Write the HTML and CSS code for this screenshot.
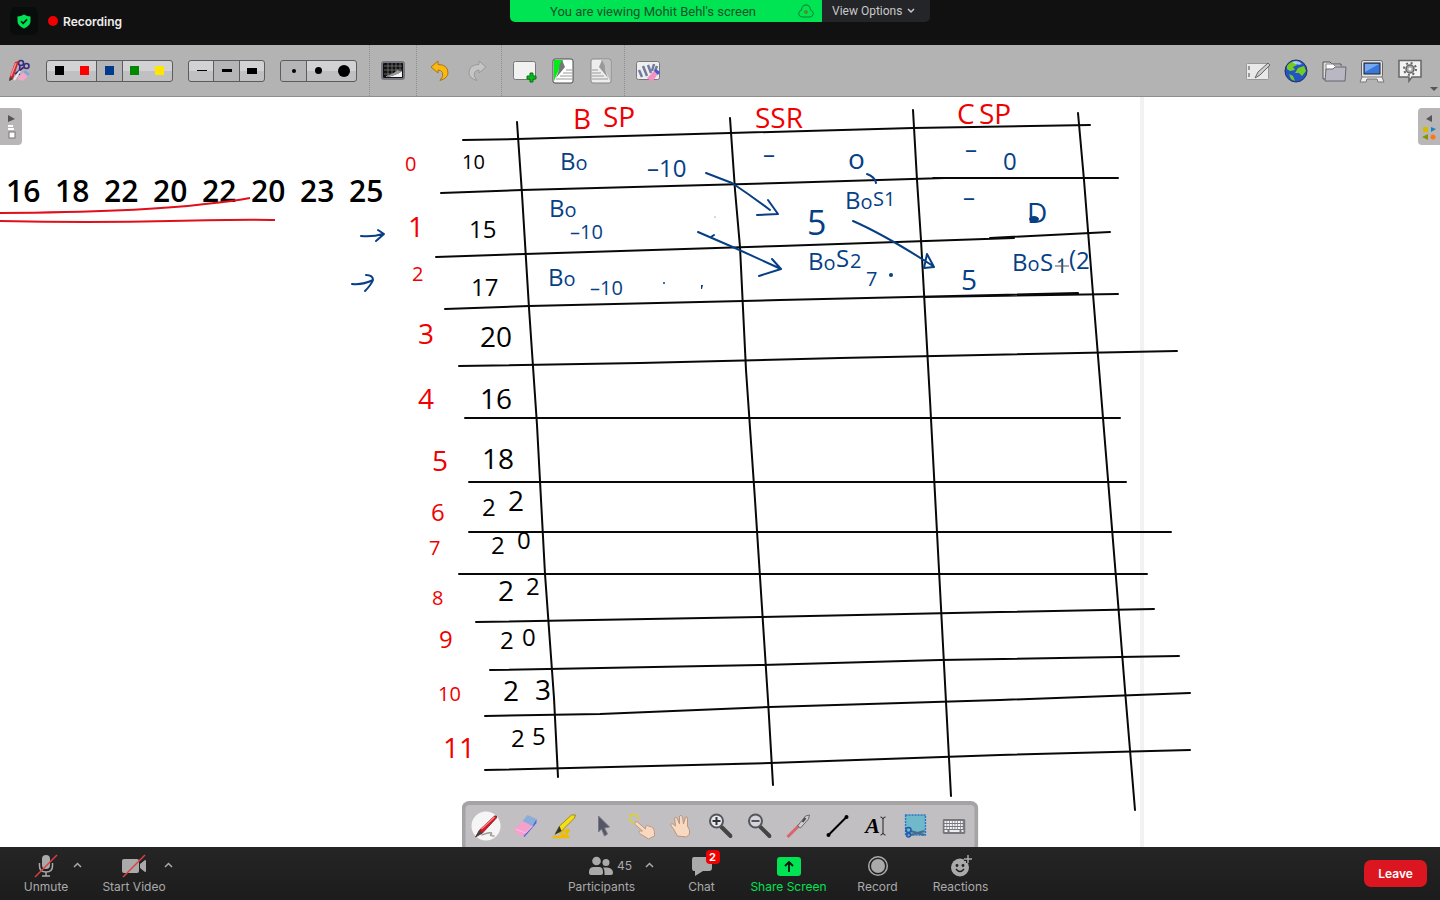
FILE: index.html
```html
<!DOCTYPE html>
<html lang="en">
<head>
<meta charset="utf-8">
<title>Screen share</title>
<link rel="stylesheet" href="styles.css">
</head>
<body>
<header class="topbar">
  <div class="status">
    <button class="shield" aria-label="Meeting information"><svg width="14" height="15" viewBox="0 0 14 15"><path d="M7 0.500Q10 2.500 13.500 2.500V7Q13.500 12 7 14.500Q.5 12 .5 7V2.500Q4 2.500 7 .5Z" fill="#00e352"/><path d="M4 7.200L6.200 9.400L10 5.400" fill="none" stroke="#111" stroke-width="1.600"/></svg></button>
    <span class="rec-dot"></span><span class="rec-label">Recording</span>
  </div>
  <div class="sharing">
    <div class="viewing"><span>You are viewing Mohit Behl's screen</span>
      <svg class="cloud" width="16" height="14" viewBox="0 0 16 14" fill="none" stroke="#087d32"><path d="M4 13Q.7 12.500.7 9.500Q.7 6.900 3.500 6.200Q3.700 1 8 1T12.500 6.200Q15.300 6.900 15.300 9.500Q15.300 12.500 12 13Z"/><circle cx="8" cy="8" r="1.500" fill="#5c8b20" stroke="#5c8b20"/></svg></div>
    <button class="options">View Options <svg width="8" height="6" viewBox="0 0 8 6"><path d="M1 1L4 4L7 1" fill="none" stroke="#c8c8c8" stroke-width="1.500"/></svg></button>
  </div>
</header>

<nav class="toolbar" aria-label="Board tools">
  <button class="tool" aria-label="Stylus tools"><svg width="24" height="24" viewBox="0 0 24 24"><path d="M10 20L18 11L23 15L16 22Z" fill="#f1a7c8"/><path d="M16 13L18 11L23 15L21 17Z" fill="#7aa5df"/><g fill="none" stroke="#392a7d" stroke-width="1.600"><circle cx="14" cy="4" r="2.500"/><circle cx="19.500" cy="7" r="2.500"/><path d="M13 6L12 16M17 8L8 15"/></g><path d="M8 3L12 2L6 20L2 22L3 17Z" fill="#cb2632"/><path d="M9 4L4 17" stroke="#ff8a8a" stroke-width="1.500"/><path d="M2 22L3 18L6 20Z" fill="#444"/><path d="M13 12L7 21" stroke="#eee" stroke-width="2"/></svg></button>
  <div class="segment colors">
    <button aria-label="Black"><i class="swatch black"></i></button><button aria-label="Red"><i class="swatch red"></i></button><button class="on" aria-label="Blue"><i class="swatch blue"></i></button><button aria-label="Green"><i class="swatch green"></i></button><button aria-label="Yellow"><i class="swatch yellow"></i></button>
  </div>
  <div class="segment">
    <button aria-label="Thin line"><i class="line thin"></i></button><button class="on" aria-label="Medium line"><i class="line medium"></i></button><button aria-label="Thick line"><i class="line thick"></i></button>
  </div>
  <div class="segment">
    <button class="on" aria-label="Small eraser"><i class="dot small"></i></button><button aria-label="Medium eraser"><i class="dot mid"></i></button><button aria-label="Large eraser"><i class="dot large"></i></button>
  </div>
  <div class="group lead">
    <button class="tool" aria-label="Page background"><svg width="24" height="19" viewBox="0 0 24 19"><rect x="1" y="1" width="22" height="17" rx="2" fill="#111" stroke="#77777f" stroke-width="2"/><path d="M3 5H21M3 9H21M3 13H21M7 2V16M11 2V16M15 2V16M19 2V16" stroke="#777" stroke-width=".8"/><path d="M6 16Q16 14 21 10V16Z" fill="#f4f4f4"/><path d="M5 15Q15 12 17 8Q17 11 21 10Q17 14 5 16Z" fill="#999"/></svg></button>
  </div>
  <div class="group">
    <button class="tool" aria-label="Undo"><svg width="20" height="22" viewBox="0 0 20 22"><path d="M1 7L8 1V4.500Q18 4.500 18 13Q18 18 10 20.500Q14 16 12.500 12.500Q11 10 8 10V13Z" fill="#fbb80f" stroke="#a87618"/></svg></button>
    <button class="tool" aria-label="Redo"><svg width="20" height="22" viewBox="0 0 20 22"><path d="M18 7L11 1V4.500Q1 4.500 1 13Q1 18 9 20.500Q5 16 6.500 12.500Q8 10 11 10V13Z" fill="#c5c5c5" stroke="#999"/></svg></button>
  </div>
  <div class="group">
    <button class="tool" aria-label="New page"><svg width="26" height="26" viewBox="0 0 26 26"><rect x="1.500" y="3.500" width="22" height="18" rx="2" fill="#f1f1f1" stroke="#77777a"/><path d="M18 15H21V18H24V21H21V24H18V21H15V18H18Z" fill="#09bd19" stroke="#087213"/></svg></button>
    <button class="tool" aria-label="Previous page"><svg width="22" height="26" viewBox="0 0 22 26"><rect x="1" y="1" width="20" height="24" rx="2" fill="#fff" stroke="#4a4a4a"/><path d="M2 2H11L2 23Z" fill="#00ed18"/><path d="M10 2L13 9L4 20Q8 10 7 8L10 2Z" fill="#777"/><path d="M14 12H20M11 15H20M8 18H20M4 21H20" stroke="#999"/></svg></button>
    <button class="tool" aria-label="Next page"><svg width="22" height="26" viewBox="0 0 22 26"><rect x="1" y="1" width="20" height="24" rx="2" fill="#ededed" stroke="#888"/><path d="M11 2H20V23Z" fill="#c0c0c0"/><path d="M12 2L9 9L18 20Q14 10 15 8Z" fill="#999"/><path d="M2 12H8M2 15H11M2 18H14M2 21H18" stroke="#999"/></svg></button>
  </div>
  <div class="group">
    <button class="tool" aria-label="Erase page"><svg width="26" height="24" viewBox="0 0 26 24"><rect x="1.500" y="2.500" width="23" height="18" rx="2" fill="#eee" stroke="#79767b"/><path d="M4 11L7 18M8 7L12 17M13 6L16 14M19 5L17 12M22 7L20 12" stroke="#6f7c9b" stroke-width="2.500"/><path d="M12 19L19 12L23 15L17 23Z" fill="#f591c5"/><path d="M19 12L21 10L25 13L23 16Z" fill="#4659cd"/></svg></button>
  </div>
  <div class="apps">
    <button class="tool" aria-label="Board"><svg width="26" height="20" viewBox="0 0 26 20"><rect x="1.500" y="2.500" width="22" height="16" rx="1" fill="#e9e9e9" stroke="#999"/><path d="M4 5V9M4 12V16" stroke="#999" stroke-width="2"/><path d="M10 17L13 11L23 2L25 4L15 14Z" fill="#ccc" stroke="#666"/></svg></button>
    <button class="tool" aria-label="Web"><svg width="24" height="24" viewBox="0 0 24 24"><circle cx="12" cy="12" r="11" fill="#2454c4" stroke="#20325d"/><path d="M3 7Q7 2 11 3L13 6L9 8L11 11L6 12L3 10ZM14 9L20 7L22 12L18 17L15 14L11 14ZM5 15L9 17L11 22L7 20Z" fill="#75cb22"/><path d="M8 3Q14 0 18 5Q13 7 8 3" fill="#c6e1fb" opacity=".8"/></svg></button>
    <button class="tool" aria-label="Documents"><svg width="26" height="24" viewBox="0 0 26 24"><path d="M2 3H9L11 5H20V20H2Z" fill="#ddd" stroke="#555"/><path d="M5 5H12L14 7H21V12H5Z" fill="#fff" stroke="#888"/><path d="M5 10H12L14 8H25L24 22H4Z" fill="#b8b7c2" stroke="#676672"/></svg></button>
    <button class="tool" aria-label="Desktop"><svg width="26" height="24" viewBox="0 0 26 24"><rect x="2.500" y="1.500" width="21" height="17" rx="2" fill="#e3e3e3" stroke="#666"/><rect x="5" y="4" width="16" height="11" fill="#3977dc" stroke="#222"/><path d="M6 5H20L6 13Z" fill="#78a9f0"/><path d="M3 18H23L25 23H19L18 20H8L7 23H1Z" fill="#eee" stroke="#777"/></svg></button>
    <button class="tool" aria-label="Settings"><svg width="26" height="24" viewBox="0 0 26 24"><path d="M2 1.500H24V18H15L12 22V18H2Z" fill="#f3f3f3" stroke="#666" stroke-width="1.500"/><circle cx="13" cy="10" r="6" fill="none" stroke="#666" stroke-width="2" stroke-dasharray="2 2.700"/><circle cx="13" cy="10" r="4" fill="#aaa" stroke="#666" stroke-width="1.500"/><circle cx="13" cy="10" r="1.500" fill="#fff"/></svg></button>
  </div>
  <svg class="more" width="8" height="5" viewBox="0 0 8 5"><path d="M0 0H8L4 4Z" fill="#555"/></svg>
</nav>

<main class="board">
  <svg class="canvas" viewBox="0 97 1440 750" preserveAspectRatio="xMinYMin meet" role="img" aria-label="Handwritten table">
    <path d="M1142 97V847" stroke="#f2f1f4" stroke-width="4"/>
    <g class="grid">
      <path d="M463 140L517 139L730 133L913 128L1090 125"/>
      <path d="M441 193L522 190L780 183L945 178M933 178H1118"/>
      <path d="M436 257L525 254L780 246L1014 238M990 238L1110 232"/>
      <path d="M445 309L529 306L780 300L1078 293M925 297L1118 294"/>
      <path d="M459 366L640 363L840 358L1177 351"/>
      <path d="M465 418H1120M469 482H1126M469 532H1171M459 574H1147"/>
      <path d="M476 622L760 617L1000 612L1154 609"/>
      <path d="M490 670L760 665L940 660L1179 656"/>
      <path d="M485 716L600 714L770 707L1000 700L1190 693"/>
      <path d="M485 770L770 763L1000 755L1190 750"/>
      <path d="M517 122L522 194L529 308L537 425L545 574L554 698L558 777"/>
      <path d="M730 118L735 190L740 247L746 370L755 500L768 700L773 785"/>
      <path d="M913 110L917 180L921 240L930 400L939 570L951 796"/>
      <path d="M1078 113L1084 180L1093 294L1103 418L1117 590L1125 690L1135 810"/>
    </g>
    <g class="typed">
      <text x="6" y="202">16</text><text x="55" y="202">18</text><text x="104" y="202">22</text><text x="153" y="202">20</text><text x="202" y="202">22</text><text x="251" y="202">20</text><text x="300" y="202">23</text><text x="349" y="202">25</text>
    </g>
    <path d="M0 213Q140 212 205 204Q235 201 250 198M0 221Q90 223 170 221T275 220" class="underline"/>
    <g class="ink black">
      <text x="462" y="169" class="s">10</text>
      <text x="469" y="238">15</text>
      <text x="471" y="296">17</text>
      <text x="480" y="347" class="l">20</text>
      <text x="480" y="409" class="l">16</text>
      <text x="482" y="469" class="l">18</text>
      <text x="482" y="516">2</text><text x="508" y="511" class="l">2</text>
      <text x="491" y="554">2</text><text x="517" y="549">0</text>
      <text x="498" y="601" class="l">2</text><text x="526" y="595">2</text>
      <text x="500" y="649">2</text><text x="522" y="646">0</text>
      <text x="503" y="701" class="l">2</text><text x="535" y="700" class="l">3</text>
      <text x="511" y="747">2</text><text x="532" y="745">5</text>
    </g>
    <g class="ink red">
      <text x="405" y="171" class="s">0</text><text x="408" y="237" class="l">1</text><text x="412" y="281" class="s">2</text><text x="418" y="344" class="l">3</text><text x="418" y="409" class="l">4</text><text x="432" y="471" class="l">5</text><text x="431" y="521">6</text><text x="429" y="555" class="s">7</text><text x="432" y="605" class="s">8</text><text x="439" y="648">9</text><text x="438" y="701" class="s">10</text><text x="443" y="758" class="l">11</text>
      <text x="573" y="129" class="l">B</text><text x="603" y="127" class="l">SP</text>
      <text x="755" y="128" class="l">SSR</text>
      <text x="957" y="124" class="l">C</text><text x="979" y="124" class="l">SP</text>
    </g>
    <g class="ink blue">
      <text x="560" y="170">B<tspan class="s">o</tspan></text><text x="647" y="177">–10</text>
      <text x="549" y="217">B<tspan class="s">o</tspan></text><text x="570" y="239" class="s">–10</text>
      <text x="548" y="286">B<tspan class="s">o</tspan></text><text x="590" y="295" class="s">–10</text>
      <text x="763" y="163">–</text><text x="848" y="169" class="l">o</text>
      <text x="845" y="209">B<tspan class="s">o</tspan></text><text x="873" y="206" class="s">S1</text>
      <text x="807" y="235" class="xl">5</text>
      <text x="808" y="270">B<tspan class="s">o</tspan></text><text x="836" y="267">S</text><text x="850" y="268" class="s">2</text>
      <text x="866" y="286" class="s">7</text>
      <text x="965" y="158">–</text><text x="1003" y="170">0</text>
      <text x="963" y="206">–</text><text x="1027" y="223" class="l">D</text>
      <text x="961" y="290" class="l">5</text>
      <text x="1012" y="271">B<tspan class="s">o</tspan></text><text x="1040" y="271">S</text><text x="1056" y="273" class="s">1</text><text x="1069" y="267">(</text><text x="1076" y="269">2</text>
    </g>
    <g class="arrows">
      <path d="M361 236Q373 237 383 234M378 230L384 234L376 241"/>
      <path d="M352 284Q363 285 373 280M366 275Q373 275 373 280Q371 285 365 291"/>
      <path d="M706 173L732 183Q750 195 770 210M768 200L778 214L757 215"/>
      <path d="M698 232L735 248L781 269M711 237L714 235M772 259L781 269L759 276"/>
      <path d="M853 221Q885 235 933 266M927 254L934 267L924 268Z"/>
      <path d="M867 174Q875 177 876 183"/>
    </g>
    <g fill="#063f86"><ellipse cx="1034" cy="219" rx="5" ry="3"/><circle cx="891" cy="275" r="2"/><circle cx="664" cy="283" r="1"/><path d="M701 285h2l-1 4h-1z"/><circle cx="715" cy="217" r=".5"/></g>
    <path d="M1062 258V273M1055 266H1069" stroke="#555" stroke-width="1"/>
  </svg>

  <button class="tab left" aria-label="Pages"><svg width="10" height="24" viewBox="0 0 10 24"><path d="M2 0L9 4L2 7Z" fill="#555"/><path d="M2 11H7M2 14H8" stroke="#fff" stroke-width="2"/><rect x="3" y="17" width="6" height="6" fill="#fff" stroke="#777"/></svg></button>
  <button class="tab right" aria-label="Library"><svg width="14" height="26" viewBox="0 0 14 26"><path d="M10 1L4 5L10 8Z" fill="#555"/><path d="M1 13H6V18H1Z" fill="#d6b900"/><path d="M9 13L14 15L9 18Z" fill="#1584bd"/><path d="M6 20L0 23L6 26Z" fill="#829700"/><circle cx="11" cy="23" r="2.500" fill="#ff7616"/></svg></button>

  <div class="palette" role="toolbar" aria-label="Drawing tools">
    <button class="on" aria-label="Pen"><svg width="30" height="30" viewBox="0 0 30 30"><path d="M10 24Q21 20 20 23Q17 25 23 25" fill="none" stroke="#999" stroke-width="1.500"/><path d="M4 26L8 19L23 5Q26 4 25 7L11 22Z" fill="#d51a25" stroke="#691d22" stroke-width=".7"/><path d="M10 18L23 6" stroke="#ff8585" stroke-width="1.200"/><path d="M4 26L8 19L11 22Z" fill="#444"/></svg></button>
    <button aria-label="Eraser"><svg width="24" height="24" viewBox="0 0 24 24"><path d="M1 15L9 7L19 12L10 23L2 19Z" fill="#f6a0cd"/><path d="M9 7L14 1L23 5L19 12Z" fill="#8aaed9"/><path d="M19 12L23 5V9L11 23L10 22Z" fill="#5367d9"/><path d="M2 15L12 19L19 12" fill="none" stroke="#fac4df"/></svg></button>
    <button aria-label="Marker"><svg width="26" height="26" viewBox="0 0 26 26"><path d="M1 24H16L8 20M11 19Q20 15 16 19T18 24" fill="none" stroke="#eebc00" stroke-width="2.500"/><path d="M4 20L8 13L20 2L24 2L23 5L9 19Z" fill="#f6dd14" stroke="#80720d" stroke-width=".7"/><path d="M3 22L8 13L10 18Z" fill="#333"/></svg></button>
    <button aria-label="Select"><svg width="16" height="22" viewBox="0 0 16 22"><path d="M3 1L14 12L9 13L12 19L9 21L6 14L3 17Z" fill="#555664" stroke="#777985"/></svg></button>
    <button aria-label="Play"><svg width="28" height="28" viewBox="0 0 28 28"><path d="M9 10L17 17Q17 12 20 14L23 15Q26 16 26 22L26 24L20 27L12 22Q8 19 12 19L14 19L6 12Q7 8 9 10Z" fill="#f8d8be" stroke="#bd9980"/><path d="M5 1V4M5 9V12M0 6H3M8 6H11M1 2L3 4M9 2L7 4M1 10L3 8" stroke="#e5d413" stroke-width="1.500"/></svg></button>
    <button aria-label="Scroll"><svg width="24" height="26" viewBox="0 0 24 26"><path d="M8 23L4 16L1 12Q2 9 6 13L5 5Q7 3 8 6L10 11V3Q12 1 13 4L14 11L16 4Q18 3 18 6L18 13L20 17L20 21L17 24Z" fill="#f8d8be" stroke="#b79780"/></svg></button>
    <button aria-label="Zoom in"><svg width="24" height="26" viewBox="0 0 24 26"><path d="M13 14L22 23" stroke="#444" stroke-width="4" stroke-linecap="round"/><circle cx="8" cy="8" r="6.500" fill="#e8e8ef" stroke="#55565c" stroke-width="2"/><path d="M4 8H12M8 4V12" stroke="#333" stroke-width="2"/></svg></button>
    <button aria-label="Zoom out"><svg width="24" height="26" viewBox="0 0 24 26"><path d="M13 14L22 23" stroke="#444" stroke-width="4" stroke-linecap="round"/><circle cx="8" cy="8" r="6.500" fill="#d5d4de" stroke="#55565c" stroke-width="2"/><path d="M4 8H12" stroke="#555" stroke-width="2"/></svg></button>
    <button aria-label="Laser pointer"><svg width="26" height="26" viewBox="0 0 26 26"><path d="M2 24L14 12" stroke="#d9646c" stroke-width="3"/><path d="M12 13L20 3L24 2L23 6L15 15Z" fill="#ccc" stroke="#555" stroke-width=".8"/><path d="M17 9L20 5" stroke="#444" stroke-width="2"/></svg></button>
    <button aria-label="Line"><svg width="24" height="24" viewBox="0 0 24 24"><path d="M3 21L21 3" stroke="#000" stroke-width="2"/><circle cx="3" cy="21" r="2" /><circle cx="21" cy="3" r="2"/></svg></button>
    <button class="letter" aria-label="Text">A<svg width="7" height="20" viewBox="0 0 7 20"><path d="M1 1Q3 1 3.500 3Q4 1 6 1M3.500 3V17M1 19Q3 19 3.500 17Q4 19 6 19" fill="none" stroke="#222"/></svg></button>
    <button aria-label="Capture"><svg width="22" height="24" viewBox="0 0 22 24"><rect x="1" y="1" width="20" height="20" fill="#70b9cb" stroke="#2476cc" stroke-width="1.500" stroke-dasharray="2 1"/><path d="M6 17L20 21M6 21L20 17" stroke="#466a91" stroke-width="2"/><circle cx="4" cy="16" r="2.500" fill="none" stroke="#245aab" stroke-width="1.500"/><circle cx="4" cy="21" r="2" fill="none" stroke="#245aab" stroke-width="1.500"/></svg></button>
    <button aria-label="Keyboard"><svg width="23" height="15" viewBox="0 0 23 15"><rect x=".5" y=".5" width="22" height="14" rx="1" fill="#777782" stroke="#777"/><path d="M2 3H21M2 6H21M2 9H21" stroke="#f5f5f5" stroke-width="2" stroke-dasharray="2 .7"/><path d="M2 12H5M7 12H17M19 12H21" stroke="#eee" stroke-width="2"/></svg></button>
  </div>
</main>

<footer class="meeting">
  <div class="media">
    <div class="control audio"><button class="item"><span class="icon"><svg width="24" height="24" viewBox="0 0 24 24"><rect x="8" y="1" width="8" height="14" rx="4" fill="#aaa"/><path d="M5.500 9V12Q5.500 18 12 18T18.500 12V9M12 18V22M8 22H16" fill="none" stroke="#aaa" stroke-width="1.500"/><path d="M1 23L23 1" stroke="#df3e43" stroke-width="1.500"/></svg></span>Unmute</button>
      <button class="caret" aria-label="Audio options"><svg width="9" height="6" viewBox="0 0 9 6"><path d="M1 5L4.500 1.500L8 5" fill="none" stroke="#aaa" stroke-width="1.500"/></svg></button></div>
    <div class="control video"><button class="item"><span class="icon"><svg width="26" height="24" viewBox="0 0 26 24"><rect x="1" y="5" width="17" height="14" rx="2" fill="#aaa"/><path d="M19 10L24 6Q25 6 25 7V17Q25 18 24 18L19 14Z" fill="#aaa"/><path d="M2 23L24 1" stroke="#df3e43" stroke-width="1.500"/></svg></span>Start Video</button>
      <button class="caret" aria-label="Video options"><svg width="9" height="6" viewBox="0 0 9 6"><path d="M1 5L4.500 1.500L8 5" fill="none" stroke="#aaa" stroke-width="1.500"/></svg></button></div>
  </div>
  <div class="actions">
    <div class="control people"><button class="item"><span class="icon"><svg width="24" height="20" viewBox="0 0 24 20"><circle cx="7.500" cy="5" r="4.300" fill="#aaa"/><circle cx="17" cy="6.500" r="3.500" fill="#aaa"/><path d="M0 16Q0 11 5 11H10Q14 11 14 16V17Q14 19 12 19H2Q0 19 0 17ZM14 11.500H18Q24 12 24 17Q24 19 22 19H15.500V16Q15.500 13 14 11.500Z" fill="#aaa"/></svg><span class="count">45</span></span>Participants</button>
      <button class="caret" aria-label="Participant options"><svg width="9" height="6" viewBox="0 0 9 6"><path d="M1 5L4.500 1.500L8 5" fill="none" stroke="#aaa" stroke-width="1.500"/></svg></button></div>
    <button class="item chat"><span class="icon"><svg width="22" height="20" viewBox="0 0 22 20"><path d="M3 1H18Q21 1 21 4V12Q21 15 18 15H12L4 20V15H3Q1 15 1 12V4Q1 1 3 1Z" fill="#aaa"/></svg><b class="badge">2</b></span>Chat</button>
    <button class="item share"><span class="icon"><svg width="24" height="19" viewBox="0 0 24 19"><rect width="24" height="19" rx="3" fill="#00e352"/><path d="M12 15V5M8 9L12 5L16 9" fill="none" stroke="#111" stroke-width="1.800"/></svg></span>Share Screen</button>
    <button class="item record"><span class="icon"><svg width="22" height="22" viewBox="0 0 22 22"><circle cx="11" cy="11" r="9.300" fill="none" stroke="#aaa" stroke-width="1.500"/><circle cx="11" cy="11" r="7" fill="#aaa"/></svg></span>Record</button>
    <button class="item react"><span class="icon"><svg width="22" height="22" viewBox="0 0 22 22"><circle cx="10" cy="12.500" r="9" fill="#aaa"/><circle cx="7" cy="10.500" r="1.400" fill="#222"/><circle cx="13" cy="10.500" r="1.400" fill="#222"/><path d="M6 14Q10 19 14 14" fill="none" stroke="#222" stroke-width="1.500"/><path d="M18 0V8M14 4H22" stroke="#222" stroke-width="4"/><path d="M18 0V8M14 4H22" stroke="#aaa" stroke-width="1.500"/></svg></span>Reactions</button>
  </div>
  <button class="leave">Leave</button>
</footer>
</body>
</html>
```

FILE: styles.css
```css
* { box-sizing: border-box; }
body { margin: 0; min-height: 100vh; display: flex; flex-direction: column; background: #fff; font-family: Inter, "Liberation Sans", sans-serif; overflow: hidden; }
button { margin: 0; padding: 0; border: 0; background: none; font: inherit; color: inherit; cursor: pointer; }
svg { display: block; flex: none; }

.topbar { height: 45px; flex: none; display: grid; grid-template-columns: 1fr auto 1fr; align-items: start; background: #111; }
.status { display: flex; align-items: center; padding: 7px 0 0 10px; color: #eee; font-size: 12px; font-weight: 600; }
.shield { width: 28px; height: 28px; border-radius: 6px; background: #080d0b; display: grid; place-items: center; }
.rec-dot { width: 10px; height: 10px; margin: 0 5px 0 10px; border-radius: 50%; background: #f00000; }
.sharing { display: flex; height: 22px; border-radius: 0 0 5px 5px; overflow: hidden; font-family: Roboto, sans-serif; }
.viewing { width: 312px; display: flex; align-items: center; justify-content: flex-end; gap: 42px; padding-right: 8px; background: #00e352; color: #14532d; font-size: 13px; }
.options { width: 108px; display: flex; align-items: center; gap: 5px; padding-left: 10px; background: #242528; color: #c8c8c8; font-size: 12px; }

.toolbar { position: relative; height: 52px; flex: none; display: flex; align-items: center; background: #b3b3b3; border-bottom: 1px solid #8e8e8e; }
.tool { width: 38px; height: 38px; display: grid; place-items: center; }
.segment { display: flex; height: 22px; margin: 0 7px 0 8px; border: 1px solid #5c5c5e; border-radius: 3px; overflow: hidden; background: linear-gradient(#d2d1d3 50%, #c0bfc1 50%); }
.segment button { width: 25px; display: grid; place-items: center; }
.segment .on { background: #b5b4b6; box-shadow: 1px 0 #5c5c5e, -1px 0 #5c5c5e; }
.swatch { width: 9px; height: 9px; }
.swatch.black { background: #000; }
.swatch.red { background: #f00; }
.swatch.blue { background: #003a8c; }
.swatch.green { background: #008a00; }
.swatch.yellow { background: #ffe600; }
.line { width: 10px; background: #000; }
.thin { height: 1px; }
.medium { height: 3px; }
.thick { height: 6px; }
.dot { border-radius: 50%; background: #000; }
.small { width: 4px; height: 4px; }
.mid { width: 7px; height: 7px; }
.large { width: 12px; height: 12px; }
.group { height: 100%; display: flex; align-items: center; padding: 0 4px; border-left: 1px dotted #8e8e8e; }
.lead { margin-left: 5px; }
.apps { display: flex; margin-left: auto; padding-right: 11px; }
.more { position: absolute; right: 2px; bottom: 4px; }

.board { position: relative; flex: 1; min-height: 0; overflow: hidden; background: #fff; }
.canvas { width: 100%; height: auto; }
.grid { fill: none; stroke: #080808; stroke-width: 2; stroke-linecap: round; stroke-linejoin: round; }
.typed { font: 600 30px "Open Sans", sans-serif; fill: #000; }
.underline { fill: none; stroke: #e0101a; stroke-width: 2; }
.ink { font-family: "Open Sans", sans-serif; font-size: 24px; }
.ink .s { font-size: 20px; }
.ink .l { font-size: 28px; }
.ink .xl { font-size: 34px; }
.ink.black { fill: #000; }
.ink.red { fill: #f00000; }
.ink.blue { fill: #063f86; }
.arrows { fill: none; stroke: #063f86; stroke-width: 2; stroke-linecap: round; stroke-linejoin: round; }

.tab { position: absolute; display: grid; place-items: center; height: 37px; width: 22px; background: #b9b6b7; }
.tab.left { left: 0; top: 11px; border-radius: 0 4px 4px 0; }
.tab.right { right: 0; top: 11px; border-radius: 4px 0 0 4px; }
.palette { position: absolute; left: 50%; bottom: 0; transform: translateX(-50%); display: flex; height: 46px; padding: 0 1px; border: 4px solid #a5a3a5; border-bottom: 0; border-radius: 8px 8px 0 0; background: #c1bfc1; }
.palette button { width: 39px; height: 42px; display: flex; align-items: center; justify-content: center; }
.palette .on { background: radial-gradient(circle, #f5f5f5 14px, transparent 15px); }
.palette .letter { font: italic 700 22px "Liberation Serif", serif; }

.meeting { height: 53px; flex: none; display: flex; justify-content: space-between; background: linear-gradient(#252525, #1c1c1c); color: #aaa; font-size: 12px; line-height: 16px; }
.media, .actions { display: flex; }
.media { width: 179px; padding-left: 14px; }
.control { position: relative; }
.item { width: 100%; display: flex; flex-direction: column; align-items: center; padding-top: 6px; }
.icon { position: relative; height: 26px; display: flex; align-items: center; gap: 4px; }
.audio { width: 64px; }
.video { width: 80px; margin-left: 16px; }
.caret { position: absolute; top: 10px; right: -5px; width: 12px; height: 16px; display: grid; place-items: center; }
.video .caret { right: 0; }
.people { width: 112px; }
.people .caret { right: 2px; }
.people .icon { padding-left: 18px; }
.chat { width: 88px; }
.share { width: 86px; color: #00e352; }
.record { width: 92px; }
.react { width: 74px; }
.badge { position: absolute; left: 15px; top: -3px; width: 14px; height: 14px; border-radius: 4px; background: #f00000; color: #fff; font-size: 11px; line-height: 14px; text-align: center; }
.leave { width: 63px; height: 27px; margin: 13px 13px 0 0; border-radius: 7px; background: #dc1620; color: #fff; font-weight: 600; }
```
